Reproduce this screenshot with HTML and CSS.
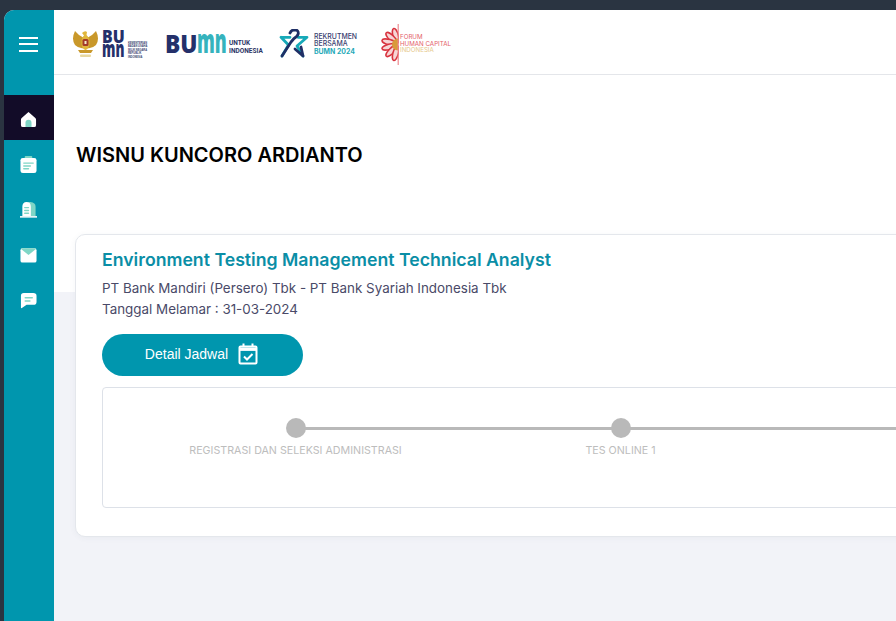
FILE: index.html
```html
<!DOCTYPE html>
<html lang="id">
<head>
<meta charset="utf-8">
<title>Rekrutmen Bersama BUMN</title>
<link rel="stylesheet" href="styles.css">
</head>
<body>
<div class="app">
  <aside class="sidebar">
    <button class="burger" aria-label="Menu"><span></span><span></span><span></span></button>
    <nav class="nav">
      <a class="nav-item active" aria-label="Beranda">
        <svg viewBox="0 0 18 18"><path class="ic-w" d="M9 1 L16.2 7.4 Q17 8.1 17 9.2 V15 Q17 17 15 17 H3 Q1 17 1 15 V9.2 Q1 8.1 1.8 7.4 Z"/><path class="ic-a" d="M5.8 17 V12.4 A3.2 3.2 0 0 1 12.2 12.4 V17 Z"/></svg>
      </a>
      <a class="nav-item" aria-label="Lamaran">
        <svg viewBox="0 0 18 18"><rect class="ic-a" x="5" y="0" width="8" height="4" rx="1"/><rect class="ic-w" x="0.5" y="2" width="17" height="16" rx="2.5"/><path class="ic-l" d="M4 7.5 H14 M4 10.5 H11 M4 13.5 H9"/></svg>
      </a>
      <a class="nav-item" aria-label="Perusahaan">
        <svg viewBox="0 0 18 18"><path class="ic-a" d="M9 1 H11 Q16.5 1.5 16.5 6 V16 H9 Z"/><path class="ic-w" d="M2.5 16 V6 Q2.5 1 7 1 Q11.5 1 11.5 6 V16 Z"/><path class="ic-l" d="M5 7 H9 M5 10 H9 M5 13 H9"/><rect class="ic-w" x="0" y="16" width="18" height="1.6"/></svg>
      </a>
      <a class="nav-item" aria-label="Pesan">
        <svg viewBox="0 0 18 18"><rect class="ic-w" x="0.5" y="2.5" width="17" height="15" rx="2"/><path class="ic-a" d="M0.7 3 Q1 2.5 2.5 2.5 H15.5 Q17 2.5 17.3 3 L9 9.5 Z"/></svg>
      </a>
      <a class="nav-item nav-chat" aria-label="Obrolan">
        <svg viewBox="0 0 18 18"><path class="ic-w" d="M4 1 H14 Q17.5 1 17.5 4 V10.5 Q17.5 13.5 14 13.5 H7 L2 17 Q1 17.5 1 16.5 V4 Q1 1 4 1 Z"/><path class="ic-l" d="M5.5 6 H13 M5.5 9.5 H10.5"/></svg>
      </a>
    </nav>
  </aside>

  <main class="main">
    <header class="topbar">
      <div class="logo logo-gov">
        <svg class="garuda" width="27" height="29" viewBox="0 0 27 29">
          <path fill="#c9982a" d="M3 2 Q-1 10 3 16 Q7 20 12 19 V9 Q7 7 3 2 Z"/>
          <path fill="#c9982a" d="M24 2 Q28 10 24 16 Q20 20 15 19 V9 Q20 7 24 2 Z"/>
          <path fill="#e0b63c" d="M10 4 Q13 1 15 3 L14.5 6 Q18 9 17.5 15 Q17 20 13.5 21 Q10 20 9.5 15 Q9 9 12 6.5 Z"/>
          <rect x="10.5" y="10" width="6" height="7" rx="1.5" fill="#a33a2a"/>
          <rect x="12.5" y="12" width="2" height="3" fill="#f3e9c8"/>
          <path fill="#c9982a" d="M6 21 H21 L19 24 H8 Z"/>
          <rect x="8" y="25.5" width="11" height="2.5" rx="1" fill="#e8d8a0"/>
        </svg>
        <svg class="stack" width="23" height="28" viewBox="0 0 23 28" role="img" aria-label="BUMN">
          <text class="t-heavy" transform="translate(0 13) scale(.88 1)" font-size="18" fill="#24306a">BU</text>
          <text class="t-heavy" transform="translate(0 27) scale(.61 1)" font-size="22" fill="#24306a">mn</text>
        </svg>
        <div class="ministry">KEMENTERIAN<br>BADAN USAHA<br>MILIK NEGARA<br>REPUBLIK<br>INDONESIA</div>
      </div>
      <div class="logo logo-bumn">
        <svg width="62" height="20" viewBox="0 0 62 20" role="img" aria-label="BUMN">
          <text class="t-heavy" transform="translate(0 19) scale(.91 1)" font-size="25" fill="#24306a">BU</text>
          <text class="t-heavy" transform="translate(32 19) scale(.54 1)" font-size="33" fill="#35b3bd">mn</text>
        </svg>
        <div class="untuk">UNTUK<br>INDONESIA</div>
      </div>
      <div class="logo logo-rb">
        <svg width="30" height="30" viewBox="0 0 30 30" fill="none" stroke-linecap="round" stroke-linejoin="round" stroke-width="2.8">
          <path stroke="#16a9b8" d="M2 8.3 H11 M2 8.3 L9.5 16 L3 27 M19 8.3 H28 L18 17 L24 27"/>
          <path stroke="#1f2f66" d="M11 4 Q12 .8 16 .8 Q19.5 1 19.3 4.5 Q19 7 15 9.5 L12 13 L3 27"/>
          <path stroke="#1f2f66" d="M16 20 L24 27 L22 18"/>
        </svg>
        <div class="rb-text">REKRUTMEN<br>BERSAMA<br><span class="rb-year">BUMN 2024</span></div>
      </div>
      <div class="logo logo-forum">
        <svg width="18" height="41" viewBox="0 0 18 41">
          <g fill="#f7d5d5" stroke="#d8343f" stroke-width="1.5">
            <ellipse cx="8" cy="20.5" rx="7.5" ry="2.7" transform="rotate(75 17 20.5)"/>
            <ellipse cx="8" cy="20.5" rx="7.5" ry="2.7" transform="rotate(45 17 20.5)"/>
            <ellipse cx="8" cy="20.5" rx="7.5" ry="2.7" transform="rotate(15 17 20.5)"/>
            <ellipse cx="8" cy="20.5" rx="7.5" ry="2.7" transform="rotate(-15 17 20.5)"/>
            <ellipse cx="8" cy="20.5" rx="7.5" ry="2.7" transform="rotate(-45 17 20.5)"/>
            <ellipse cx="8" cy="20.5" rx="7.5" ry="2.7" transform="rotate(-75 17 20.5)"/>
          </g>
          <path fill="#d99a3a" d="M17 14.5 A6 6 0 0 0 17 26.5 Z"/>
          <rect x="16.6" y="0" width="1.2" height="41" fill="#ee8a8f"/>
        </svg>
        <div class="forum-text">FORUM<br>HUMAN CAPITAL<br><span class="forum-id">INDONESIA</span></div>
      </div>
    </header>

    <section class="hero">
      <h1 class="name">WISNU KUNCORO ARDIANTO</h1>
    </section>

    <section class="content">
      <article class="card">
        <h2 class="job-title">Environment Testing Management Technical Analyst</h2>
        <p class="meta">PT Bank Mandiri (Persero) Tbk - PT Bank Syariah Indonesia Tbk</p>
        <p class="meta">Tanggal Melamar : 31-03-2024</p>
        <button class="btn">
          <span>Detail Jadwal</span>
          <svg width="20" height="22" viewBox="0 0 20 22" fill="none" stroke="#fff" stroke-width="2"><rect x="1.5" y="3.5" width="17" height="17" rx="1"/><path stroke-width="3.4" d="M1.5 6.2 H18.5"/><path d="M5.5 0.5 V4 M14.5 0.5 V4"/><path d="M6 13.5 L9 16.5 L14.5 11"/></svg>
        </button>
        <div class="stepper">
          <div class="step"><span class="dot"></span><span class="step-label">REGISTRASI DAN SELEKSI ADMINISTRASI</span></div>
          <div class="step"><span class="dot"></span><span class="step-label">TES ONLINE 1</span></div>
          <div class="step step-empty"><span class="dot"></span></div>
        </div>
      </article>
    </section>
  </main>
</div>
</body>
</html>
```

FILE: styles.css
```css
* { box-sizing: border-box; }
html, body { height: 100%; }
body {
  margin: 0;
  overflow: hidden;
  background: #2a3441;
  padding: 10px 0 0 4px;
  font-family: Inter, "Liberation Sans", sans-serif;
  color: #4a4a68;
}
.app {
  display: flex;
  height: 100%;
  border-top-left-radius: 10px;
  overflow: hidden;
  background: #f2f3f8;
}
.sidebar {
  flex: 0 0 50px;
  background: #0096ae;
  display: flex;
  flex-direction: column;
}
.burger {
  height: 85px;
  padding: 0 2px 17px 0;
  border: 0;
  background: none;
  display: flex;
  flex-direction: column;
  align-items: center;
  justify-content: center;
  gap: 4.5px;
}
.burger span { width: 19px; height: 2px; background: #fff; }
.nav { display: flex; flex-direction: column; }
.nav-item {
  height: 45px;
  padding: 3px 2px 0 0;
  display: flex;
  align-items: center;
  justify-content: center;
}
.nav-item svg { width: 17px; height: 17px; }
.nav-item.active { background: #120c28; }
.nav-chat { padding-top: 5px; }
.ic-w { fill: #fff; }
.ic-a { fill: #7fd6c6; }
.ic-l { fill: none; stroke: #7fd6c6; stroke-width: 1.5; stroke-linecap: round; }

.main { flex: 1; min-width: 0; display: flex; flex-direction: column; }
.topbar {
  height: 65px;
  flex: none;
  background: #fff;
  border-bottom: 1px solid #e4e6ea;
  display: flex;
  align-items: center;
  padding: 4px 0 0 18px;
}
.logo { display: flex; align-items: center; flex: none; }
.logo-gov { width: 93px; }
.garuda { margin-top: -2px; }
.t-heavy { font-family: "Open Sans", sans-serif; font-weight: 800; }
.stack { margin-left: 3px; }
.ministry {
  margin: 13px 0 0 3px;
  font: 700 2.6px/3.5px "Liberation Sans", sans-serif;
  color: #3a4270;
  white-space: nowrap;
}
.logo-bumn { width: 114px; }
.untuk {
  margin-left: 2px;
  padding-top: 6px;
  font: 700 6.5px/8px Roboto, sans-serif;
  color: #2c3566;
}
.logo-rb { width: 102px; }
.rb-text {
  margin-left: 5px;
  font: 500 6.9px/7.6px Inter, sans-serif;
  color: #3a4270;
}
.rb-year { color: #1fa9b8; font-weight: 700; }
.forum-text {
  margin-left: 1px;
  font: 400 6.2px/6.6px Inter, sans-serif;
  color: #e4606a;
}
.forum-id { color: #e6c98c; }

.hero { flex: none; height: 217px; background: #fff; padding: 68px 0 0 22px; }
.name {
  margin: 0;
  font: 600 20px/24px Inter, sans-serif;
  letter-spacing: 0;
  color: #000;
}
.content { flex: 1; padding-left: 21px; min-width: 0; }
.card {
  width: 1200px;
  height: 303px;
  margin-top: -58px;
  position: relative;
  background: #fff;
  border: 1px solid #e4e7ec;
  border-radius: 10px;
  box-shadow: 0 1px 6px rgba(60, 70, 100, .05);
  padding: 13px 0 0 26px;
}
.job-title {
  margin: 0 0 6px;
  font: 600 17.7px/24px Inter, sans-serif;
  color: #0a8ea6;
}
.meta { margin: 0; font: 400 13.4px/21px Inter, sans-serif; color: #4a4a68; }
.btn {
  margin-top: 14px;
  width: 201px;
  height: 42px;
  padding: 0 2px 2px 0;
  border: 0;
  border-radius: 21px;
  background: #0096ae;
  color: #fff;
  font: 400 14px "Liberation Sans", sans-serif;
  display: flex;
  align-items: center;
  justify-content: center;
  gap: 10px;
}
.stepper {
  margin-top: 11px;
  width: 1090px;
  height: 121px;
  border: 1px solid #dde1e8;
  border-radius: 4px;
  padding: 30px 0 0 30px;
  display: flex;
}
.step {
  position: relative;
  flex: 0 0 325px;
  display: flex;
  flex-direction: column;
  align-items: center;
}
.step::after {
  content: "";
  position: absolute;
  top: 9px;
  left: 50%;
  width: 325px;
  height: 3px;
  background: #b9b9b9;
}
.step-empty::after { display: none; }
.dot {
  position: relative;
  z-index: 1;
  width: 20px;
  height: 20px;
  border-radius: 50%;
  background: #b9b9b9;
}
.step-label {
  margin-top: 7px;
  font: 400 10.7px/12px Inter, sans-serif;
  color: #bdbdbd;
  white-space: nowrap;
}
```
